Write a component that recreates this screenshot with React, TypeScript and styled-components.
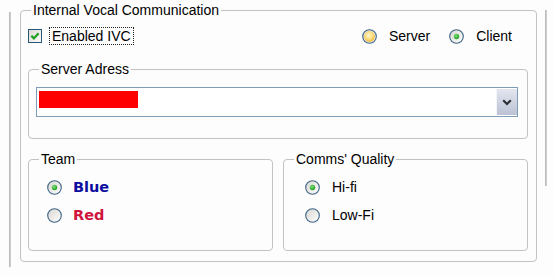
import React, { useId } from 'react'
import styled, { createGlobalStyle } from 'styled-components'

const GlobalStyle = createGlobalStyle`
  html,
  body {
    margin: 0;
    background: #fdfdfd;
  }
  body {
    color: #000;
    font-family: 'Liberation Sans', Arial, sans-serif;
    font-size: 14px;
  }
`

const Page = styled.div`
  align-items: flex-start;
  box-sizing: border-box;
  display: flex;
  height: 277px;
  overflow: hidden;
  padding: 2px 0 0 9px;
  width: 554px;
`

const Rail = styled.div<{ $top: number; $height: number; $gap: number }>`
  background: linear-gradient(90deg, #b4b4b4, #d4d4d4);
  flex: none;
  height: ${p => p.$height}px;
  margin-left: ${p => p.$gap}px;
  margin-top: ${p => p.$top}px;
  width: 2px;
`

const Group = styled.fieldset<{ $width?: number }>`
  border: 1px solid #c2c2c2;
  border-radius: 4px;
  box-sizing: border-box;
  flex: none;
  margin: 0;
  min-width: 0;
  padding: 0;
  width: ${p => (p.$width ? `${p.$width}px` : 'auto')};
`

const Outer = styled(Group)`
  margin-left: 9px;
`

const Caption = styled.legend`
  font-size: 14px;
  line-height: 16px;
  margin-left: 10px;
  padding: 0 2px;
`

const Body = styled.div<{ $pad: string }>`
  padding: ${p => p.$pad};
`

const TopRow = styled.div`
  align-items: center;
  display: flex;
  height: 20px;
  justify-content: space-between;
  padding-right: 16px;
`

const CheckLabel = styled.label`
  align-items: center;
  display: flex;
  gap: 7px;
`

const FocusText = styled.span`
  border: 1px dotted #222;
  line-height: 16px;
  padding: 0 2px;
`

const RadioSet = styled.div`
  display: flex;
  gap: 19px;
`

const Option = styled.label<{ $gap: number }>`
  align-items: center;
  display: flex;
  gap: ${p => p.$gap}px;
  height: 28px;
`

const InlineOption = styled(Option)`
  height: 20px;
`

const TeamName = styled.span<{ $tone: string }>`
  color: ${p => p.$tone};
  font-family: 'DejaVu Sans', Tahoma, sans-serif;
  font-size: 14.5px;
  font-weight: bold;
`

const AddressGroup = styled(Group)`
  margin-top: 15px;
`

const Combo = styled.div`
  align-items: flex-start;
  background: #fff;
  border: 1px solid #7f9db9;
  box-sizing: border-box;
  display: flex;
  height: 30px;
`

const Redacted = styled.div`
  background: #ff0000;
  height: 17px;
  margin: 3px 0 0 2px;
  width: 99px;
`

const DropButton = styled.div`
  align-items: center;
  background: linear-gradient(#e3e6f0, #bcc2d4);
  border-left: 1px solid #f4f5fa;
  box-sizing: border-box;
  display: flex;
  height: 26px;
  justify-content: center;
  margin: 1px 0 0 auto;
  width: 21px;
`

const Columns = styled.div`
  display: grid;
  gap: 10px;
  grid-template-columns: 245px 245px;
  margin-top: 12px;
`

const CheckBox = () => {
  const id = useId()
  return (
    <svg width="14" height="14" viewBox="0 0 14 14">
      <defs>
        <linearGradient id={id} x1="0" y1="0" x2="1" y2="1">
          <stop offset="0" stopColor="#d9d7d4" />
          <stop offset="1" stopColor="#ffffff" />
        </linearGradient>
      </defs>
      <rect x="0.5" y="0.5" width="13" height="13" fill={`url(#${id})`} stroke="#2a5878" />
      <path d="M3.3 6.8 L5.9 9.4 L10.6 4.2" fill="none" stroke="#21a121" strokeWidth="2.3" />
    </svg>
  )
}

const Radio = ({ checked, hot }: { checked?: boolean; hot?: boolean }) => {
  const id = useId()
  return (
    <svg width="15" height="15" viewBox="0 0 15 15" style={{ flex: 'none' }}>
      <defs>
        <linearGradient id={`${id}b`} x1="0" y1="0" x2="1" y2="1">
          <stop offset="0" stopColor="#d6d5cf" />
          <stop offset="1" stopColor="#ffffff" />
        </linearGradient>
        <radialGradient id={`${id}h`} cx="0.45" cy="0.4" r="0.6">
          <stop offset="0" stopColor="#fff7d2" />
          <stop offset="0.6" stopColor="#fbdc7c" />
          <stop offset="1" stopColor="#f1b437" />
        </radialGradient>
        <radialGradient id={`${id}d`} cx="0.4" cy="0.35" r="0.7">
          <stop offset="0" stopColor="#7fe07a" />
          <stop offset="1" stopColor="#1a9a1a" />
        </radialGradient>
      </defs>
      <circle cx="7.5" cy="7.5" r="6.8" fill={`url(#${id}b)`} stroke="#3d6384" strokeWidth="1.1" />
      {hot && <circle cx="7.5" cy="7.5" r="5.4" fill={`url(#${id}h)`} />}
      {checked && <circle cx="7.5" cy="7.5" r="2.7" fill={`url(#${id}d)`} />}
    </svg>
  )
}

const Chevron = () => (
  <svg width="10" height="7" viewBox="0 0 10 7">
    <path d="M1.2 1.2 L5 5 L8.8 1.2" fill="none" stroke="#2c2c34" strokeWidth="2.2" />
  </svg>
)

export default function App() {
  return (
    <>
      <GlobalStyle />
      <Page>
        <Rail $top={10} $height={255} $gap={0} />
        <Outer $width={517}>
          <Caption>Internal Vocal Communication</Caption>
          <Body $pad="8px 8px 10px 7px">
            <TopRow>
              <CheckLabel>
                <CheckBox />
                <FocusText>Enabled IVC</FocusText>
              </CheckLabel>
              <RadioSet>
                <InlineOption $gap={12}>
                  <Radio hot />
                  Server
                </InlineOption>
                <InlineOption $gap={12}>
                  <Radio checked />
                  Client
                </InlineOption>
              </RadioSet>
            </TopRow>

            <AddressGroup>
              <Caption>Server Adress</Caption>
              <Body $pad="10px 9px 21px 7px">
                <Combo>
                  <Redacted />
                  <DropButton>
                    <Chevron />
                  </DropButton>
                </Combo>
              </Body>
            </AddressGroup>

            <Columns>
              <Group>
                <Caption>Team</Caption>
                <Body $pad="6px 0 21px 18px">
                  <Option $gap={11}>
                    <Radio checked />
                    <TeamName $tone="#0c0c9e">Blue</TeamName>
                  </Option>
                  <Option $gap={11}>
                    <Radio />
                    <TeamName $tone="#d0143c">Red</TeamName>
                  </Option>
                </Body>
              </Group>
              <Group>
                <Caption>Comms' Quality</Caption>
                <Body $pad="6px 0 21px 21px">
                  <Option $gap={12}>
                    <Radio checked />
                    Hi-fi
                  </Option>
                  <Option $gap={12}>
                    <Radio />
                    Low-Fi
                  </Option>
                </Body>
              </Group>
            </Columns>
          </Body>
        </Outer>
        <Rail $top={8} $height={176} $gap={8} />
      </Page>
    </>
  )
}
